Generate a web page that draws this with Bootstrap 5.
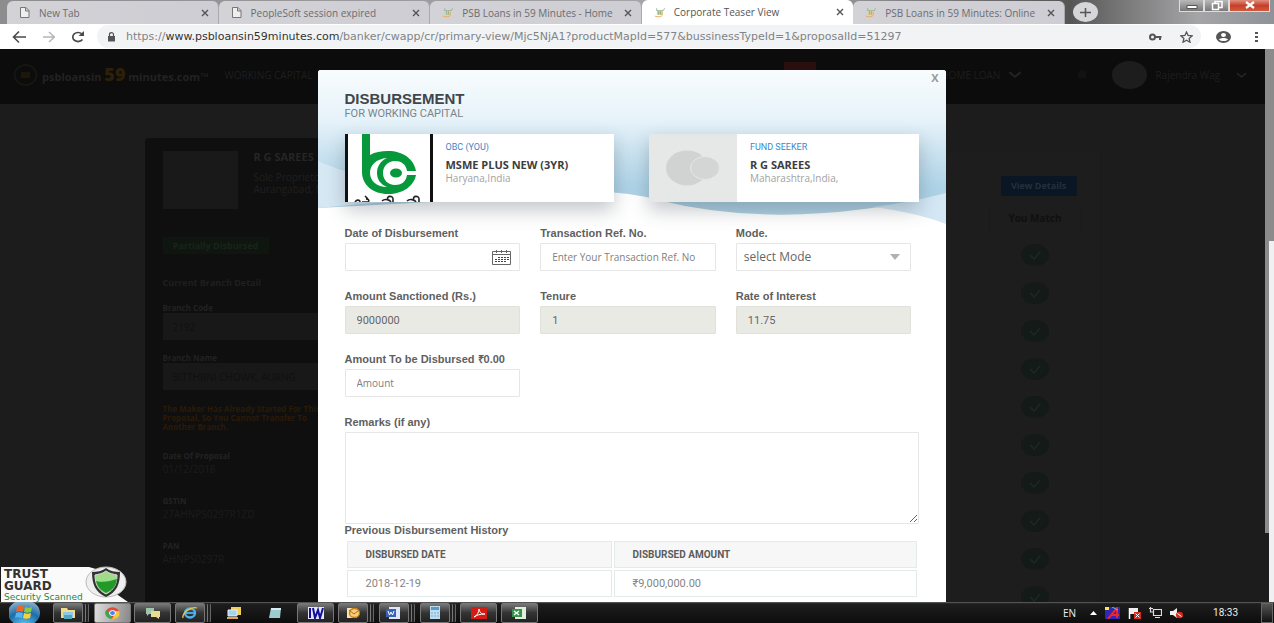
<!DOCTYPE html>
<html lang="en">
<head>
<meta charset="utf-8">
<meta name="viewport" content="width=device-width, initial-scale=1">
<title>Corporate Teaser View</title>
<link href="https://cdn.jsdelivr.net/npm/bootstrap@5.3.0/dist/css/bootstrap.min.css" rel="stylesheet">
<style>
body{font-family:"Open Sans",Roboto,sans-serif;font-size:10px;line-height:12px;color:#666;overflow:hidden}
button,input,select,textarea{font-family:inherit}
svg{display:block;flex:none}
/* browser chrome */
.tabstrip{height:24px;background:linear-gradient(90deg,#8d8d90 0,#a9a9ad 60%,#555 84%,#777 88%,#a5a5a8 94%,#8e9299 100%);padding-left:7px}
.browser-tab{flex:0 1 16.7%;min-width:0;height:23px;background:linear-gradient(90deg,#d2d2d7,#cdcdd3);color:#6c6c70;padding:0 9px 0 12px;gap:9px;border-radius:6px 6px 0 0;border-right:1px solid #a9a9ae}
.browser-tab.current{background:#fff;color:#555;height:24px;border-right:0}
.tab-title{flex:1;min-width:0;overflow:hidden;white-space:nowrap}
.plain{border:0;background:none;padding:0;color:inherit}
.new-tab{width:25px;height:20px;border-radius:50%;background:#d6d6da;margin-left:8px}
.win-ctl{height:12px;border:1px solid #ddd;border-top:0;background:linear-gradient(#b9b9ba,#777);width:25px}
.win-ctl.shut{width:41px;background:linear-gradient(#e09080,#c8402a 50%,#cf5a3e)}
.toolbar{height:25px;background:#fff;color:#555;padding:0 16px 0 11px}
.addressbar{flex:1;height:23px;border-radius:12px;background:#f1f3f4;margin:0 15px 0 12px;padding:0 8px 0 10px;gap:10px}
.address{flex:1;min-width:0;overflow:hidden;white-space:nowrap;font:11px/16px "DejaVu Sans",sans-serif;color:#808387}
.address b{font-weight:400;color:#333}
/* dimmed page */
.page{background:#1c1c1c;color:#1e1e1e}
.site-head{height:55px;background:#0c0c0c;padding:0 18px 3px 13px}
.brand-name{font:bold 11px/16px "Open Sans",sans-serif;color:#222}
.brand-name b{font-size:18px;color:#2c200a}
.avatar{width:35px;height:28px;border-radius:50%;background:#1d1d1d}
.site-flag{width:32px;height:8px;background:#2b0f0f;left:784px;top:13px}
.head-bell{margin:0 24px 0 54px}
.page-body{max-width:976px;margin:34px auto 0}
.side{flex:0 0 300px;background:#0f0f0f;border-radius:4px 0 0 0;padding:13px 18px;height:520px;color:#1f1f1f}
.thumb{width:75px;height:58px;background:#191919}
.firm{font-size:11px;line-height:12px;color:#252525}
.state-pill{margin-top:28px;width:106px;height:17px;background:#0f150f;color:#1a241a;font-weight:700;font-size:9px;line-height:17px;text-align:center}
.side h2{font-size:9px;line-height:12px;font-weight:700;margin:23px 0 13px}
.side label,.side dt{display:block;font-size:8px;font-weight:700;line-height:11px;color:#222}
.side .dim-input{display:block;width:100%;height:27px;border:0;background:#181818;color:#101010;padding:0 10px;font-size:10px;margin-bottom:12px}
.side .note{color:#2b1a08;font-size:8px;font-weight:700;line-height:9px;margin:14px 0 0}
.side dl{margin:19px 0 0}
.side dt{line-height:12px}
.side dd{line-height:14px;margin:0 0 19px;color:#1c1c1c}
.match{flex:1;margin:15px 20px 0 0;border-right:1px solid #191919;padding:23px 18px 0 0;background:#1d1d1d}
.view-btn{width:76px;height:20px;background:#0a1623;color:#25303c;border:0;border-radius:2px;font-size:9px;font-weight:700;margin:0 5px 11px}
.match-head{width:93px;height:25px;border:1px solid #1a1a1a;border-width:0 1px;text-align:center;line-height:23px;font-weight:700;color:#101010;margin-bottom:12px}
.tick{width:93px;margin-bottom:16px}
.scrolls{flex:0 0 9px;background:#f0f0f4}
.scroll-top{height:192px;background:#8b8b8b}
.scroll-inner{width:4px;height:292px;background:#8b8b8b}
.scroll-rest{width:4px;flex:1;background:#1c1c1c}
/* dialog */
.overlay{top:21px;bottom:0;left:0;right:11px}
.dialog{width:100%;max-width:628px;background:#fff;border-radius:3px 3px 0 0;padding:19px 27px 0;overflow:hidden}
.dialog>*{position:relative}
.dialog>.waves{position:absolute;top:0;left:0;width:100%;height:160px}
.dialog>.close-x{position:absolute;top:1px;right:7px;font:bold 11px/14px "Open Sans",sans-serif;color:#999}
.dialog h1{font:bold 15px/20px "Liberation Sans",Arial,sans-serif;color:#41464b;margin:0}
.sub{font:11px/10px Roboto,sans-serif;color:#7b848a;margin:0 0 15px}
.party{flex:1;height:68px;background:#fff;box-shadow:0 8px 18px rgba(40,50,60,.28)}
.party-text{padding:7px 13px}
.role{font:9px/12px Roboto,sans-serif;color:#3c87c7}
.party-name{font-size:11px;line-height:14px;font-weight:700;color:#3d3d3d;margin:5px 0 0}
.place{line-height:12px;color:#a2a2a2}
.fields{--bs-gutter-x:20px;--bs-gutter-y:18px;margin-top:6px}
.fields-box{padding:0 7px 18px 0}
.lbl{display:block;font:bold 11px/14px "Liberation Sans",Arial,sans-serif;color:#5f5f5f;margin:0 0 3px}
.dialog .form-control,.dialog .form-select{height:28px;min-height:0;padding:0 11px;border:1px solid #e6e6e6;border-radius:1px;font-size:10px;line-height:16px;color:#666;background-color:#fff}
.dialog .form-control::placeholder{color:#808080;opacity:1}
.dialog .form-control[readonly]{background:#eaeae4;border-color:#e2e2dc;font:11px/16px Roboto,sans-serif}
.dialog .form-select{font-size:12px;padding-left:7px;background-image:url("data:image/svg+xml,%3Csvg xmlns='http://www.w3.org/2000/svg' viewBox='0 0 10 6'%3E%3Cpath d='M0 0h10L5 6z' fill='%23b0b0b0'/%3E%3C/svg%3E");background-size:10px 6px;background-position:right 10px center}
.dialog textarea.form-control{height:92px}
.cal-btn{position:absolute;right:9px;top:7px}
.history-title{font:bold 11px/12px "Liberation Sans",Arial,sans-serif;color:#5f5f5f;margin:0 0 3px}
.history{width:100%;border-collapse:separate;border-spacing:2px;table-layout:fixed;color:#858585}
.history th,.history td{height:27px;border:1px solid #e3eaea;padding:0 18px;font:11px/14px Roboto,sans-serif}
.history th{background:#f7f7f7;font-weight:700;font-size:10px;color:#5c5c5c}
.history th:first-child{width:265px}
/* security seal */
.seal{left:0;bottom:0;width:128px;height:36px}
.seal svg{position:absolute;inset:0}
.seal-text{position:relative;font:bold 12px/12px "DejaVu Sans",sans-serif;color:#333;padding:2px 4px 0}
.seal-text small{display:block;font:9px/10px "DejaVu Sans",sans-serif;color:#1c8a45}
/* taskbar */
.taskbar{height:21px;background:linear-gradient(#6a6a6a,#1e1e1e 8%,#0d0d0d);color:#eee;padding-right:1px}
.start{flex:0 0 53px}
.task{flex:0 0 3.2%;height:20px}
.task button{height:20px;width:30px;border:1px solid #777;border-radius:2px;background:linear-gradient(#777,#333 50%,#222);padding:0;display:flex;align-items:center;justify-content:center}
.task.wide button{width:37px}
.task.bare button{border:0;background:none;width:37px}
.task.on button{background:linear-gradient(100deg,#ddd,#888)}
.task.stack button{box-shadow:3px 0 0 -1px #222,4px 0 0 -1px #777,6px 0 0 -1px #222,7px 0 0 -1px #666}
.tray{gap:8px;font-size:10px}
.tray-lang{margin-right:6px}
.clock{margin:0 23px 0 30px;font:10px/12px Roboto,sans-serif}
.peek{width:12px;height:20px;border:1px solid #666;background:linear-gradient(#555,#111)}
</style>
</head>
<body>
<svg width="0" height="0" class="position-absolute" aria-hidden="true">
  <defs>
    <symbol id="doc" viewBox="0 0 10 11"><path d="M1 .5h5.500l3 3v7H1zM6 .5v3.500h3.500" fill="#eee" stroke="#777" /></symbol>
    <symbol id="psb" viewBox="0 0 12 11"><path d="M3 1v2.500h7L11.500 1" stroke="#7fb095" fill="none"/><path d="M3.500 3.500h6L9 8H3z" fill="#e6c98e"/><path d="M5 4v4M7 4v4" stroke="#8ab58e"/><path d="M1 9.500c3 1 7 1 8-1V5" stroke="#e8a860" fill="none"/></symbol>
    <symbol id="cross" viewBox="0 0 8 8"><path d="M1 1l6 6M7 1L1 7" stroke="#555" stroke-width="1.400"/></symbol>
    <symbol id="ok" viewBox="0 0 28 22"><ellipse cx="14" cy="11" rx="14" ry="11" fill="#131a18"/><path d="M9 11l4 4 6-7" stroke="#1f2825" stroke-width="1.500" fill="none"/></symbol>
    <symbol id="chev" viewBox="0 0 12 7"><path d="M1 1l5 4 5-4" fill="none" stroke="#232323" stroke-width="1.800"/></symbol>
  </defs>
</svg>
<div class="d-flex flex-column vh-100">
  <header>
    <div class="tabstrip d-flex align-items-end">
      <div class="browser-tab d-flex align-items-center"><svg width="11" height="11"><use href="#doc"/></svg><span class="tab-title">New Tab</span><button class="plain" aria-label="Close tab"><svg width="8" height="8"><use href="#cross"/></svg></button></div>
      <div class="browser-tab d-flex align-items-center"><svg width="11" height="11"><use href="#doc"/></svg><span class="tab-title">PeopleSoft session expired</span><button class="plain" aria-label="Close tab"><svg width="8" height="8"><use href="#cross"/></svg></button></div>
      <div class="browser-tab d-flex align-items-center"><svg width="11" height="11"><use href="#psb"/></svg><span class="tab-title">PSB Loans in 59 Minutes - Home</span><button class="plain" aria-label="Close tab"><svg width="8" height="8"><use href="#cross"/></svg></button></div>
      <div class="browser-tab current d-flex align-items-center"><svg width="11" height="11"><use href="#psb"/></svg><span class="tab-title">Corporate Teaser View</span><button class="plain" aria-label="Close tab"><svg width="8" height="8"><use href="#cross"/></svg></button></div>
      <div class="browser-tab d-flex align-items-center"><svg width="11" height="11"><use href="#psb"/></svg><span class="tab-title">PSB Loans in 59 Minutes: Online</span><button class="plain" aria-label="Close tab"><svg width="8" height="8"><use href="#cross"/></svg></button></div>
      <button class="plain new-tab d-flex align-items-center justify-content-center align-self-center" aria-label="New tab"><svg width="11" height="9" viewBox="0 0 11 9"><path d="M0 4.500h11M5.500 0v9" stroke="#555" stroke-width="1.500"/></svg></button>
      <div class="ms-auto d-flex align-self-start me-1">
        <button class="win-ctl p-0 d-flex justify-content-center" aria-label="Minimize"><svg width="12" height="10"><path d="M1 5.500h10v3H1z" fill="#fff" stroke="#555"/></svg></button>
        <button class="win-ctl p-0 d-flex justify-content-center" aria-label="Restore"><svg width="12" height="11"><path d="M4 1.500h7v6H4z" fill="none" stroke="#fff" stroke-width="1.500"/><path d="M1.500 3.500h6v6h-6z" fill="#888" stroke="#fff" stroke-width="1.500"/></svg></button>
        <button class="win-ctl shut p-0 d-flex justify-content-center" aria-label="Close"><svg width="10" height="9"><path d="M1 2l8 6M9 2L1 8" stroke="#fff" stroke-width="2.200"/></svg></button>
      </div>
    </div>
    <div class="toolbar d-flex align-items-center">
      <button class="plain" aria-label="Back"><svg width="16" height="14"><path d="M15 7H3M8 1.500L2.500 7 8 12.500" fill="none" stroke="#4a4a4a" stroke-width="1.600"/></svg></button>
      <button class="plain ms-3" aria-label="Forward"><svg width="12" height="14"><path d="M0 7h11M6 2l5.500 5L6 12" fill="none" stroke="#b5b5b5" stroke-width="1.500"/></svg></button>
      <button class="plain ms-3" aria-label="Reload"><svg width="14" height="12"><path d="M11.500 8.500A5.300 4.500 0 1 1 11 3" fill="none" stroke="#4a4a4a" stroke-width="1.700"/><path d="M13 0v5H7.500z" fill="#4a4a4a"/></svg></button>
      <div class="addressbar d-flex align-items-center">
        <svg width="9" height="10"><path d="M1 4h7v5.500H1z" fill="#555"/><path d="M2.500 4V2.500a2 1.800 0 0 1 4 0V4" fill="none" stroke="#555" stroke-width="1.200"/></svg>
        <div class="address" role="textbox" aria-label="Address">https://<b>www.psbloansin59minutes.com</b>/banker/cwapp/cr/primary-view/Mjc5NjA1?productMapId=577&amp;bussinessTypeId=1&amp;proposalId=51297</div>
        <svg width="13" height="8"><circle cx="3.500" cy="4" r="2.500" fill="none" stroke="#555" stroke-width="2"/><path d="M6 4h6.500M11 4v3" stroke="#555" stroke-width="2"/></svg>
        <button class="plain ms-2" aria-label="Bookmark"><svg width="13" height="12"><path d="M6.500 1l1.600 3.500 4 .3-3 2.600.9 3.800-3.500-2-3.500 2 .9-3.800-3-2.600 4-.3z" fill="none" stroke="#555" stroke-width="1.300"/></svg></button>
      </div>
      <button class="plain" aria-label="Profile"><svg width="15" height="12"><ellipse cx="7.500" cy="6" rx="7.500" ry="6" fill="#555"/><ellipse cx="7.500" cy="4" rx="2.500" ry="1.900" fill="#fff"/><path d="M3 8.500c2-2 7-2 9 0-2 2-7 2-9 0z" fill="#fff"/></svg></button>
      <button class="plain ms-4" aria-label="Menu"><svg width="3" height="12"><path d="M0 1h3v2H0zM0 5h3v2H0zM0 9h3v2H0z" fill="#555"/></svg></button>
    </div>
  </header>

  <main class="page d-flex flex-fill position-relative overflow-hidden">
    <div class="flex-fill overflow-hidden position-relative">
      <nav class="site-head d-flex align-items-center">
        <svg width="25" height="22"><ellipse cx="12.500" cy="11" rx="11" ry="10" fill="none" stroke="#14160f" stroke-width="2"/><path d="M8 8h9v6H8z" fill="#1d1609"/></svg>
        <span class="brand-name ms-1">psbloansin <b>59</b> minutes.com™</span>
        <a href="#" class="text-reset text-decoration-none ms-3">WORKING CAPITAL</a>
        <span class="site-flag position-absolute"></span>
        <a href="#" class="text-reset text-decoration-none ms-auto">HOME LOAN</a>
        <svg class="ms-2" width="14" height="8"><use href="#chev"/></svg>
        <svg class="head-bell" width="12" height="12"><path d="M2 9V5a4 4 0 0 1 8 0v4z" fill="#121212"/></svg>
        <span class="avatar me-2"></span>
        <span>Rajendra Wag</span>
        <svg class="ms-3" width="11" height="7"><use href="#chev"/></svg>
      </nav>
      <div class="page-body d-flex">
        <aside class="side">
          <div class="d-flex">
            <div class="thumb"></div>
            <div class="ps-3"><b class="firm d-block">R G SAREES</b><span class="d-block mt-2">Sole Proprietorship</span>Aurangabad, MH</div>
          </div>
          <div class="state-pill">Partially Disbursed</div>
          <h2>Current Branch Detail</h2>
          <label for="bcode">Branch Code</label>
          <input id="bcode" class="dim-input" value="2192" readonly>
          <label for="bname">Branch Name</label>
          <input id="bname" class="dim-input" value="BITTHRNI CHOWK, AURNG" readonly>
          <p class="note">The Maker Has Already Started For This<br>Proposal, So You Cannot Transfer To<br>Another Branch.</p>
          <dl>
            <dt>Date Of Proposal</dt><dd>01/12/2018</dd>
            <dt>GSTIN</dt><dd>27AHNPS0297R1ZD</dd>
            <dt>PAN</dt><dd>AHNPS0297R</dd>
          </dl>
        </aside>
        <section class="match d-flex flex-column align-items-end">
          <button class="view-btn p-0">View Details</button>
          <div class="match-head">You Match</div>
          <div class="tick d-flex justify-content-center"><svg width="28" height="22"><use href="#ok"/></svg></div>
          <div class="tick d-flex justify-content-center"><svg width="28" height="22"><use href="#ok"/></svg></div>
          <div class="tick d-flex justify-content-center"><svg width="28" height="22"><use href="#ok"/></svg></div>
          <div class="tick d-flex justify-content-center"><svg width="28" height="22"><use href="#ok"/></svg></div>
          <div class="tick d-flex justify-content-center"><svg width="28" height="22"><use href="#ok"/></svg></div>
          <div class="tick d-flex justify-content-center"><svg width="28" height="22"><use href="#ok"/></svg></div>
          <div class="tick d-flex justify-content-center"><svg width="28" height="22"><use href="#ok"/></svg></div>
          <div class="tick d-flex justify-content-center"><svg width="28" height="22"><use href="#ok"/></svg></div>
          <div class="tick d-flex justify-content-center"><svg width="28" height="22"><use href="#ok"/></svg></div>
          <div class="tick d-flex justify-content-center"><svg width="28" height="22"><use href="#ok"/></svg></div>
        </section>
      </div>
    </div>
    <div class="scrolls d-flex flex-column" aria-hidden="true"><div class="scroll-top"></div><div class="scroll-inner"></div><div class="scroll-rest"></div></div>

    <div class="overlay position-absolute d-flex justify-content-center">
      <div class="dialog position-relative" role="dialog" aria-labelledby="dlg-title">
        <svg class="waves" viewBox="0 0 628 160" preserveAspectRatio="none" aria-hidden="true">
          <defs><linearGradient id="sky" x1="0" y1="0" x2="0" y2="1"><stop offset="0" stop-color="#f8fcfe"/><stop offset=".35" stop-color="#e6f2f9"/><stop offset=".8" stop-color="#afd4e8"/><stop offset="1" stop-color="#acd0e2"/></linearGradient></defs>
          <path d="M0 0H628V124Q467 162 340 130Q300 119 260 123Q120 132 0 138z" fill="url(#sky)"/>
          <path d="M0 91Q60 118 190 127Q100 128 0 138z" fill="#d6e8f4"/>
          <path d="M628 123Q590 133 555 137Q600 143 628 154z" fill="#d3e7f4"/>
        </svg>
        <button class="plain close-x" aria-label="Close">X</button>
        <h1 id="dlg-title">DISBURSEMENT</h1>
        <p class="sub">FOR WORKING CAPITAL</p>
        <div class="d-flex" style="gap:35px">
          <div class="party d-flex">
            <svg width="88" height="68" viewBox="0 0 88 68" role="img" aria-label="OBC logo">
              <path d="M0 0h88v68H0z" fill="#fff"/><path d="M0 0h3v68H0zM85 0h3v68h-3z" fill="#111"/>
              <path d="M17 0h8v21c5-3 11-4 18-4 15 0 26 8 28 20H62c-1-7-6-10-12-10-7 0-12 5-12 12s5 12 12 12c6 0 11-3 12-10h9c-2 11-13 19-28 19-15 0-26-9-26-22z" fill="#07983c"/>
              <path d="M42 24c-11 1-17 7-17 15s7 14 17 14c-7-3-10-8-10-14s3-12 10-15z" fill="#fff"/>
              <ellipse cx="51" cy="39" rx="6" ry="4.500" fill="#07983c"/>
              <path d="M10 68c2-3 5-2 5 0M17 68h6c2-2 0-3-2-3M20 62l3 3M37 67c3-3 8-1 9 1M43 65c-2-3 5-4 5 0v3M62 67c3-3 8-1 9 1M69 65c-2-3 5-4 5 0v3" stroke="#222" stroke-width="1.600" fill="none"/>
            </svg>
            <div class="party-text"><div class="role">OBC (YOU)</div><p class="party-name">MSME PLUS NEW (3YR)</p><div class="place">Haryana,India</div></div>
          </div>
          <div class="party d-flex">
            <svg width="88" height="68" viewBox="0 0 88 68" aria-hidden="true"><path d="M0 0h88v68H0z" fill="#e6e8e7"/><ellipse cx="38" cy="34" rx="21" ry="17.500" fill="#d1d2d2"/><ellipse cx="56" cy="34" rx="14.500" ry="11.500" fill="#d4d5d5" stroke="#e6e8e7"/></svg>
            <div class="party-text"><div class="role">FUND SEEKER</div><p class="party-name">R G SAREES</p><div class="place">Maharashtra,India,</div></div>
          </div>
        </div>
        <form>
          <div class="fields-box">
            <div class="row row-cols-3 fields">
              <div><label class="lbl" for="ddate">Date of Disbursement</label><div class="position-relative"><input id="ddate" class="form-control">
                <button type="button" class="plain cal-btn" aria-label="Open calendar"><svg width="19" height="15"><path d="M.5 1.500h18v13H.5zM.5 4.500h18M4.500 0v3M9.500 0v3M14.500 0v3" fill="none" stroke="#666"/><path d="M6 7.500h11M3 9.500h14M3 11.500h11" stroke="#444" stroke-dasharray="2 1"/></svg></button></div></div>
              <div><label class="lbl" for="tref">Transaction Ref. No.</label><input id="tref" class="form-control" placeholder="Enter Your Transaction Ref. No"></div>
              <div><label class="lbl" for="mode">Mode.</label><select id="mode" class="form-select"><option>select Mode</option></select></div>
              <div><label class="lbl" for="sanc">Amount Sanctioned (Rs.)</label><input id="sanc" class="form-control" value="9000000" readonly></div>
              <div><label class="lbl" for="tenure">Tenure</label><input id="tenure" class="form-control" value="1" readonly></div>
              <div><label class="lbl" for="rate">Rate of Interest</label><input id="rate" class="form-control" value="11.75" readonly></div>
              <div><label class="lbl" for="amt">Amount To be Disbursed ₹0.00</label><input id="amt" class="form-control" placeholder="Amount"></div>
            </div>
          </div>
          <label class="lbl" for="remarks">Remarks (if any)</label>
          <textarea id="remarks" class="form-control"></textarea>
        </form>
        <h2 class="history-title">Previous Disbursement History</h2>
        <table class="history">
          <thead><tr><th scope="col">DISBURSED DATE</th><th scope="col">DISBURSED AMOUNT</th></tr></thead>
          <tbody><tr><td>2018-12-19</td><td>₹9,000,000.00</td></tr></tbody>
        </table>
      </div>
    </div>

    <div class="seal position-absolute">
      <svg width="128" height="36" aria-hidden="true"><path d="M1 1h88l14 4 12 22 13 9H1z" fill="#fafafa"/><ellipse cx="106" cy="16" rx="20" ry="15" fill="#eee" stroke="#bbb"/><path d="M106 2c4 3 9 4 14 4 0 12-3 20-14 25-11-5-14-13-14-25 5 0 10-1 14-4z" fill="#333"/><path d="M106 5c4 3 7 3 11 4 0 9-3 15-11 19-8-4-11-10-11-19 4-1 7-1 11-4z" fill="#9fdc8a" stroke="#ddd"/><path d="M96 15c8 2 14 0 21-2-1 7-4 11-11 14-6-3-9-7-10-12z" fill="#219a2a"/></svg>
      <div class="seal-text">TRUST<br>GUARD<small>Security Scanned</small></div>
    </div>
  </main>

  <footer class="taskbar d-flex align-items-center">
    <div class="start d-flex justify-content-center"><button class="plain" aria-label="Start"><svg width="36" height="21"><defs><radialGradient id="orb" cx=".5" cy="1" r=".9"><stop offset="0" stop-color="#5fd0f5"/><stop offset=".6" stop-color="#1c6ca8"/><stop offset="1" stop-color="#7fa9c4"/></radialGradient></defs><ellipse cx="15" cy="11" rx="16" ry="13" fill="url(#orb)"/><path d="M8 5c3-2 5-1 7 0l-1 5c-3-1-5-1-7 0z" fill="#f0642c"/><path d="M16 5c2 1 5 1 7 0l-1 5c-3 1-5 1-7 0z" fill="#8ccb3c"/><path d="M7 11c2-1 4-1 7 0l-1 5c-3-1-5-1-7 0z" fill="#55b3f0"/><path d="M15 11c2 1 5 1 7 0l-1 5c-3 1-5 1-7 0z" fill="#fbd03a"/></svg></button></div>
    <div class="task stack"><button aria-label="Explorer"><svg width="16" height="12"><path d="M1 1h6l1 2h7v8H1z" fill="#f0dc8a"/><path d="M3 5h10v6H3z" fill="#8fc8e8"/><path d="M4 8h8v4H4z" fill="#4da8c0"/></svg></button></div>
    <div class="task wide on"><button aria-label="Chrome"><svg width="15" height="12"><ellipse cx="7.500" cy="6" rx="7" ry="5.800" fill="#e24a3b"/><path d="M1 3l6 5-1 4C1 11-1 7 1 3z" fill="#38a853"/><path d="M7 4h7c2 4-1 8-7 8l3-5z" fill="#fbc732"/><ellipse cx="7.500" cy="6" rx="3" ry="2.500" fill="#4787ed" stroke="#fff"/></svg></button></div>
    <div class="task wide"><button aria-label="Messenger"><svg width="16" height="12"><path d="M1 1h8v6H4L2 9V7H1z" fill="#9fc6a8"/><path d="M6 4h9v6h-1v2l-3-2H6z" fill="#e8dd92"/></svg></button></div>
    <div class="task stack"><button aria-label="Internet Explorer"><svg width="16" height="13"><ellipse cx="8" cy="7" rx="5" ry="4.500" fill="none" stroke="#48b4ef" stroke-width="2.400"/><path d="M4 7h9" stroke="#48b4ef" stroke-width="1.800"/><path d="M1 12C0 7 9 0 15 2" fill="none" stroke="#f2c341" stroke-width="1.300"/></svg></button></div>
    <div class="task bare"><button aria-label="Network"><svg width="16" height="12"><path d="M5 0h10v8H5z" fill="#f1cf5c"/><path d="M2 3h9v6H2z" fill="#a5d5ee" stroke="#eee"/><path d="M1 10h11v2H1z" fill="#e4a64a"/></svg></button></div>
    <div class="task bare"><button aria-label="Notes"><svg width="14" height="12"><path d="M3 1h10l-1 10H1z" fill="#9ecbd0"/><path d="M3 1h10v2H3z" fill="#d8ecee"/></svg></button></div>
    <div class="task wide"><button aria-label="IW"><svg width="16" height="12"><path d="M0 0h16v12H0z" fill="#e6e6f4"/><path d="M2 1v10M5 1l2 10 3-8 2 8 3-10" fill="none" stroke="#10109a" stroke-width="2"/></svg></button></div>
    <div class="task stack"><button aria-label="Outlook"><svg width="15" height="12"><path d="M1 1h10v10H1z" fill="#f7e3b0"/><ellipse cx="8.500" cy="6" rx="5" ry="4.500" fill="#f5cf7a" stroke="#c87d18" stroke-width="1.300"/><path d="M3 3l5 4 4-3" fill="none" stroke="#b56a10"/></svg></button></div>
    <div class="task stack"><button aria-label="Word"><svg width="15" height="12"><path d="M3 0h11v12H3z" fill="#dfe8f8"/><path d="M0 2h10v8H0z" fill="#3a62b5"/><path d="M2 4l1.500 4L5 5l1.500 3L8 4" fill="none" stroke="#fff"/></svg></button></div>
    <div class="task stack"><button aria-label="Calculator"><svg width="12" height="13"><path d="M1 0h10v13H1z" fill="#bcdcf1"/><path d="M2 1h8v3H2z" fill="#5a9bcb"/><path d="M2 7h8M2 10h8" stroke="#7fa8c8" stroke-dasharray="2 1"/></svg></button></div>
    <div class="task wide"><button aria-label="Acrobat"><svg width="16" height="12"><path d="M0 0h16v12H0z" fill="#d41c14"/><path d="M3 10c3-1 5-5 5-8 1 4 2 5 6 5-5 0-8 1-11 3z" fill="none" stroke="#fff"/></svg></button></div>
    <div class="task wide"><button aria-label="Excel"><svg width="15" height="12"><path d="M3 0h11v12H3z" fill="#dff0df"/><path d="M0 2h10v8H0z" fill="#37934a"/><path d="M2 4l5 4M7 4L2 8" stroke="#fff" stroke-width="1.300"/></svg></button></div>
    <div class="tray ms-auto d-flex align-items-center">
      <span class="tray-lang">EN</span>
      <svg width="7" height="4"><path d="M0 4l3.500-4L7 4z" fill="#fff"/></svg>
      <svg width="15" height="12"><path d="M0 0h15v12H0z" fill="#3424b8"/><path d="M3 12L12 1v10M6 8h8" stroke="#e82828" stroke-width="2" fill="none"/><path d="M0 0h4v3H0z" fill="#ffe93b"/><path d="M7 0l6 3" stroke="#4ac6ef"/></svg>
      <svg width="13" height="12"><path d="M1.500 1v11" stroke="#fff" stroke-width="1.500"/><path d="M2 1h8v6H2z" fill="#eee"/><path d="M6 5h7v7H6z" fill="#d8271e"/><path d="M7.500 6.500l4 4M11.500 6.500l-4 4" stroke="#fff"/></svg>
      <svg width="13" height="12"><path d="M4.500 2.500h8v6h-8zM6 10.500h5M1.500 0v5h3M0 1.500h4" fill="none" stroke="#ddd" stroke-width="1.200"/></svg>
      <svg width="13" height="12"><path d="M0 4h3l4-3v10L3 8H0z" fill="#eee"/><ellipse cx="9.500" cy="8" rx="3.500" ry="3.300" fill="#d8271e"/><path d="M7.500 6.500l4 3" stroke="#fff"/></svg>
    </div>
    <time class="clock">18:33</time>
    <button class="plain peek" aria-label="Show desktop"></button>
  </footer>
</div>
<script src="https://cdn.jsdelivr.net/npm/bootstrap@5.3.0/dist/js/bootstrap.bundle.min.js"></script>
</body>
</html>
